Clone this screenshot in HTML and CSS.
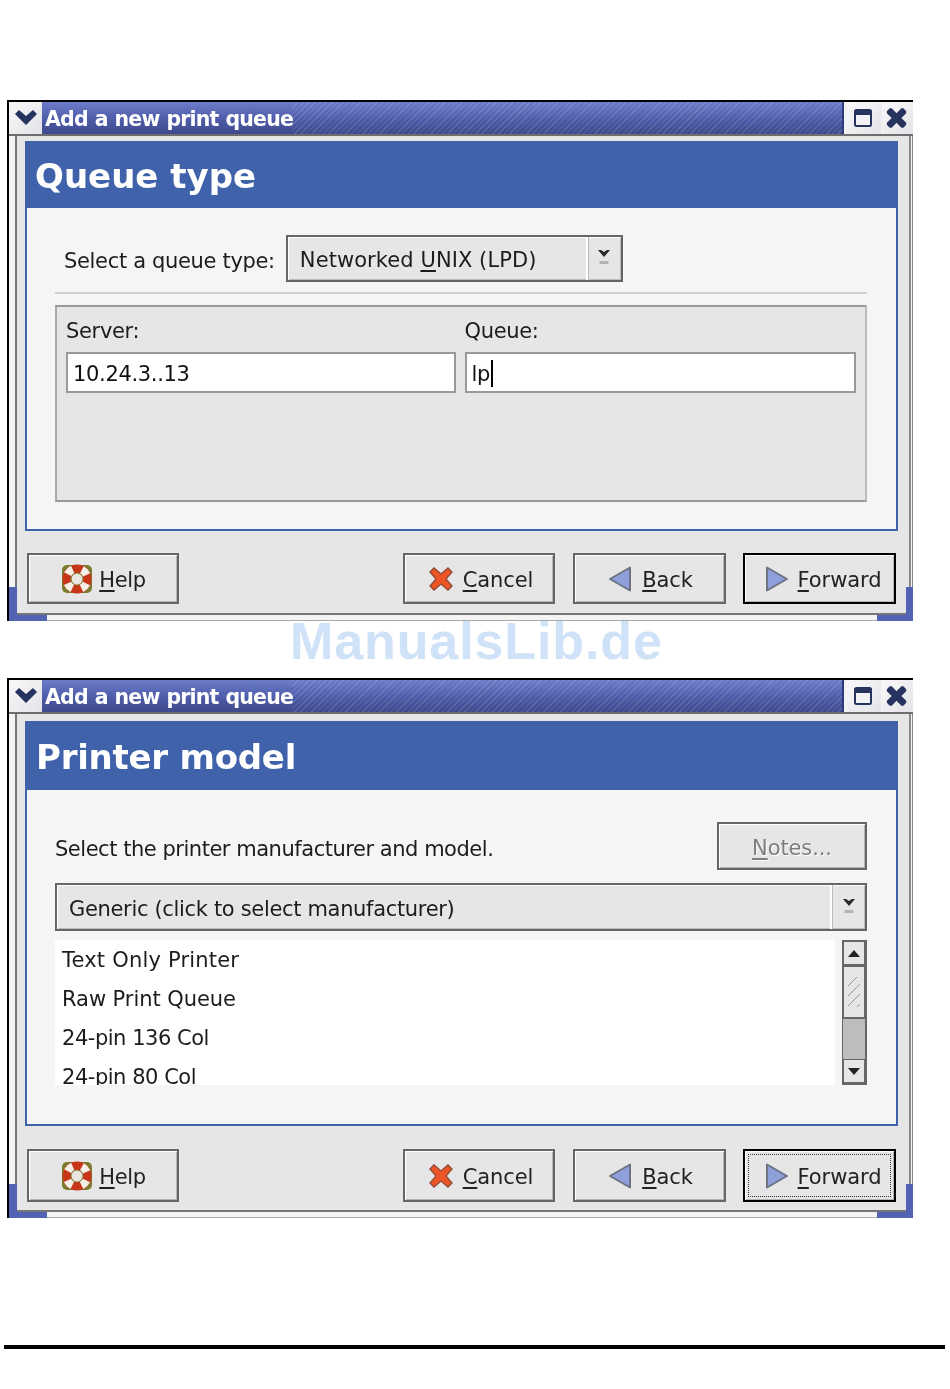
FILE: index.html
```html
<!DOCTYPE html>
<html lang="en">
<head>
<meta charset="utf-8">
<title>Add a new print queue</title>
<link rel="stylesheet" href="styles.css">
</head>
<body>
<svg class="defs" width="0" height="0" aria-hidden="true">
  <symbol id="i-menu" viewBox="0 0 33 32"><path d="M6 12 l4 -4 l7 6 l7 -6 l4 4 l-11 11z" fill="#26335f"/></symbol>
  <symbol id="i-max" viewBox="0 0 34 32"><rect x="8" y="8" width="16" height="16" rx="1.500" fill="#f2f2f6" stroke="#26335f" stroke-width="2"/><rect x="7.500" y="8" width="17" height="5" fill="#26335f"/></symbol>
  <symbol id="i-close" viewBox="0 0 32 32"><path d="M5 9 l3 -3 h2 l5 5 l5 -5 h2 l3 3 v2 l-5 5 l5 5 v2 l-3 3 h-2 l-5 -5 l-5 5 h-2 l-3 -3 v-2 l5 -5 l-5 -5z" fill="#26335f"/></symbol>
  <symbol id="i-help" viewBox="0 0 32 30"><rect x="1" y="1" width="30" height="28" rx="5" fill="#7c7a2c"/><circle cx="16" cy="15" r="10.500" fill="none" stroke="#c8361a" stroke-width="8"/><circle cx="16" cy="15" r="10.500" fill="none" stroke="#f6efe8" stroke-width="8" stroke-dasharray="7 9.500" stroke-dashoffset="-4.750"/><circle cx="16" cy="15" r="5.500" fill="#e9e6e2"/></symbol>
  <symbol id="i-cancel" viewBox="0 0 24 24"><path d="M1 5 l4 -4 l7 6 l7 -6 l4 4 l-6 7 l6 7 l-4 4 l-7 -6 l-7 6 l-4 -4 l6 -7z" fill="#ec5526" stroke="#8f4a38" stroke-width="1.300"/></symbol>
  <symbol id="i-back" viewBox="0 0 24 26"><path d="M22 1.500 V24.500 L2 13z" fill="#8f9fdc" stroke="#6d7383" stroke-width="2" stroke-linejoin="round"/></symbol>
  <symbol id="i-forward" viewBox="0 0 24 26"><path d="M2 1.500 V24.500 L22 13z" fill="#8f9fdc" stroke="#6d7383" stroke-width="2" stroke-linejoin="round"/></symbol>
  <symbol id="i-drop" viewBox="0 0 14 18"><path d="M1 2 h3 l3 2 l3 -2 h3 l-6 7z" fill="#2a2a2a"/><rect x="2.500" y="13" width="9" height="3" fill="#b4b4b4"/></symbol>
</svg>

<div class="page">
  <section class="window window-one">
    <header class="titlebar">
      <span class="wm-btn wm-menu"><svg class="wm-icon"><use href="#i-menu"/></svg></span>
      <span class="title-strip">Add a new print queue</span>
      <span class="wm-btn wm-max"><svg class="wm-icon"><use href="#i-max"/></svg></span>
      <span class="wm-btn wm-close"><svg class="wm-icon"><use href="#i-close"/></svg></span>
    </header>
    <div class="frame">
      <div class="dialog">
        <div class="content">
          <h1 class="banner">Queue type</h1>
          <div class="body body-one">
            <div class="type-row">
              <span class="label">Select a queue type:</span>
              <div class="combo combo-type"><span class="combo-text">Networked <u>U</u>NIX (LPD)</span><span class="combo-arrow"><svg class="drop"><use href="#i-drop"/></svg></span></div>
            </div>
            <div class="separator"></div>
            <div class="panel">
              <div class="field field-server">
                <span class="label">Server:</span>
                <div class="entry">10.24.3..13</div>
              </div>
              <div class="field field-queue">
                <span class="label">Queue:</span>
                <div class="entry">lp<span class="caret"></span></div>
              </div>
            </div>
          </div>
        </div>
        <div class="actions">
          <div class="btn btn-help"><svg class="ico-help"><use href="#i-help"/></svg><span><u>H</u>elp</span></div>
          <div class="spacer"></div>
          <div class="btn btn-cancel"><svg class="ico-cancel"><use href="#i-cancel"/></svg><span><u>C</u>ancel</span></div>
          <div class="btn btn-wide btn-back"><svg class="ico-arrow"><use href="#i-back"/></svg><span><u>B</u>ack</span></div>
          <div class="btn btn-wide btn-default"><svg class="ico-arrow"><use href="#i-forward"/></svg><span><u>F</u>orward</span></div>
        </div>
      </div>
    </div>
    <span class="corner corner-l"></span><span class="corner corner-r"></span>
  </section>

  <section class="window window-two">
    <header class="titlebar">
      <span class="wm-btn wm-menu"><svg class="wm-icon"><use href="#i-menu"/></svg></span>
      <span class="title-strip">Add a new print queue</span>
      <span class="wm-btn wm-max"><svg class="wm-icon"><use href="#i-max"/></svg></span>
      <span class="wm-btn wm-close"><svg class="wm-icon"><use href="#i-close"/></svg></span>
    </header>
    <div class="frame">
      <div class="dialog">
        <div class="content">
          <h1 class="banner banner-two">Printer model</h1>
          <div class="body body-two">
            <div class="model-row">
              <span class="label label-model">Select the printer manufacturer and model.</span>
              <div class="btn btn-notes"><span><u>N</u>otes...</span></div>
            </div>
            <div class="combo combo-maker"><span class="combo-text">Generic (click to select manufacturer)</span><span class="combo-arrow"><svg class="drop"><use href="#i-drop"/></svg></span></div>
            <div class="list-wrap">
              <ul class="list">
                <li class="item-text">Text Only Printer</li>
                <li class="item-raw">Raw Print Queue</li>
                <li>24-pin 136 Col</li>
                <li>24-pin 80 Col</li>
              </ul>
              <div class="scrollbar">
                <span class="sb-btn"><span class="tri-up"></span></span>
                <span class="sb-thumb"></span>
                <span class="sb-trough"></span>
                <span class="sb-btn"><span class="tri-down"></span></span>
              </div>
            </div>
          </div>
        </div>
        <div class="actions actions-two">
          <div class="btn btn-help"><svg class="ico-help"><use href="#i-help"/></svg><span><u>H</u>elp</span></div>
          <div class="spacer"></div>
          <div class="btn btn-cancel"><svg class="ico-cancel"><use href="#i-cancel"/></svg><span><u>C</u>ancel</span></div>
          <div class="btn btn-wide btn-back"><svg class="ico-arrow"><use href="#i-back"/></svg><span><u>B</u>ack</span></div>
          <div class="btn btn-wide btn-default btn-focus"><svg class="ico-arrow"><use href="#i-forward"/></svg><span><u>F</u>orward</span></div>
        </div>
      </div>
    </div>
    <span class="corner corner-l"></span><span class="corner corner-r"></span>
  </section>

  <hr class="rule">
  <div class="watermark">ManualsLib.de</div>
</div>
</body>
</html>
```
FILE: styles.css
```css
* { box-sizing: border-box; }
html, body { margin: 0; padding: 0; background: #fff; }
body { width: 950px; height: 1389px; overflow: hidden; font-family: "DejaVu Sans", sans-serif; color: #1c1c1c; }
.defs { position: absolute; }
.page { position: relative; height: 1389px; padding: 100px 0 0 7px; }
u { text-decoration-thickness: 2px; text-underline-offset: 3px; }

.window { position: relative; width: 906px; display: flex; flex-direction: column; border-top: 2px solid #000; border-left: 2px solid #000; filter: blur(0.4px); }
.window-one { height: 521px; }
.window-two { height: 540px; margin-top: 57px; }

.titlebar { display: flex; height: 34px; flex: none; border-bottom: 2px solid #6e6e6e; background: #f2f2f4; }
.wm-btn { display: block; flex: none; background: linear-gradient(135deg, #f8f8fa, #e4e4e8); }
.wm-menu { width: 33px; }
.wm-max { width: 34px; margin-left: 3px; }
.wm-close { width: 31px; margin-left: 1px; }
.wm-icon { display: block; width: 100%; height: 32px; }
.title-strip {
  flex: 1; height: 32px; padding-left: 3px; color: #fff; font-size: 20.5px; font-weight: 700; line-height: 34px; letter-spacing: -0.8px; word-spacing: 0.5px; white-space: nowrap;
  background:
    repeating-linear-gradient(135deg, rgba(255,255,255,.13) 0 1px, transparent 1px 4px) 250px 0 no-repeat,
    linear-gradient(#6d7cc9, #4d5ba8 55%, #3f4a8c);
  border-right: 2px solid #2f3a78;
}

.frame { flex: 1; padding: 0 1px 1px 6px; background: #f4f4f4; border-right: 1px solid #888; border-bottom: 1px solid #aaa; }
.dialog { height: 100%; display: flex; flex-direction: column; padding: 5px 6px 0 8px; background: #e6e6e6; border-left: 2px solid #777; border-right: 2px solid #888; border-bottom: 2px solid #777; }
.window-one .dialog { height: 479px; }
.window-two .dialog { height: 498px; padding-top: 7px; }

.content { display: flex; flex-direction: column; flex: none; border: 2px solid #3f62ab; border-top: 0; background: #f5f5f5; width: 873px; }
.window-one .content { height: 390px; }
.window-two .content { height: 405px; }
.banner { margin: 0; height: 67px; flex: none; padding-left: 8px; background: #3f62ab; color: #fff; font-size: 34px; font-weight: 700; line-height: 70px; white-space: nowrap; }
.banner-two { height: 69px; padding-left: 9px; line-height: 72px; letter-spacing: -0.25px; }
.body { flex: 1; background: #f5f5f5; }
.body-one { padding: 27px 29px 0 28px; }
.body-two { padding: 32px 29px 0 28px; }
.label, .combo, .entry, .list { font-size: 21px; letter-spacing: -0.33px; }
.label { line-height: 26px; white-space: nowrap; }
.label-model { letter-spacing: -0.47px; }

.type-row { display: flex; align-items: center; gap: 11px; padding-left: 9px; }
.type-row .label { padding-top: 4px; }
.combo { display: flex; align-items: stretch; border: 2px solid #666; background: #e6e6e6; box-shadow: inset 1px 1px 0 #fff, inset -1px -1px 0 #bbb; white-space: nowrap; }
.combo-type { width: 337px; height: 47px; letter-spacing: 0.07px; }
.combo-text { flex: 1; padding-left: 12px; line-height: 47px; border-right: 2px solid #fff; box-shadow: 1px 0 0 #bbb; }
.combo-arrow { flex: none; width: 33px; display: flex; justify-content: center; align-items: center; }
.drop { width: 14px; height: 18px; display: block; margin-top: -3px; }
.separator { height: 2px; margin-top: 10px; background: #d0d0d0; }
.panel { height: 197px; margin-top: 11px; display: flex; gap: 9px; padding: 11px 9px 0 9px; background: #e6e6e6; border: 2px solid; border-color: #999 #bbb #999 #aaa; }
.field { display: flex; flex-direction: column; gap: 8px; }
.field-server { width: 390px; }
.field-queue { width: 392px; }
.entry { height: 41px; padding-left: 5px; line-height: 41px; background: #fff; border: 2px solid #999; color: #111; }
.caret { display: inline-block; width: 2px; height: 27px; margin-left: 1px; vertical-align: -6px; background: #000; }

.actions { display: flex; gap: 17px; width: 869px; margin-left: 2px; padding-top: 22px; }
.actions-two { padding-top: 23px; }
.spacer { flex: 1; }
.actions .btn { width: 152px; height: 51px; padding-top: 2px; }
.actions .btn-wide { width: 153px; }
.actions .btn-cancel { margin-right: 1px; padding-left: 4px; }
.actions .btn-back { padding-left: 2px; }
.actions .btn-default { padding-left: 7px; gap: 9px; }
.actions-two .btn { height: 53px; }
.btn { display: flex; align-items: center; justify-content: center; gap: 10px; font-size: 21px; letter-spacing: -0.1px; background: #e6e6e6; border: 2px solid #666; box-shadow: inset 1px 1px 0 #fff, inset -1px -1px 0 #b4b4b4; color: #222; white-space: nowrap; }
.actions .btn-help { gap: 6px; letter-spacing: -0.33px; padding-left: 1px; }
.actions .btn-default { border-color: #000; position: relative; }
.btn-focus::after { content: ""; position: absolute; inset: 3px; border: 1px dotted #333; }
.ico-help { width: 32px; height: 30px; margin-top: -2px; }
.ico-cancel { width: 24px; height: 24px; margin-top: -2px; }
.ico-arrow { width: 24px; height: 26px; margin-top: -2px; }

.model-row { display: flex; align-items: center; justify-content: space-between; height: 48px; }
.model-row .label { padding-top: 5px; }
.btn-notes { width: 150px; height: 48px; padding-top: 4px; color: #7d7d7d; text-shadow: 1px 1px 0 #fff; }
.combo-maker { height: 48px; margin-top: 13px; }
.combo-maker .combo-text { padding-left: 12px; line-height: 48px; }
.list-wrap { display: flex; justify-content: space-between; margin-top: 9px; height: 145px; }
.list { width: 780px; margin: 0; padding: 0 0 0 7px; overflow: hidden; list-style: none; background: #fff; letter-spacing: -0.47px; }
.list li { height: 39px; line-height: 41px; white-space: nowrap; }
.list .item-text { letter-spacing: 0.2px; }
.list .item-raw { letter-spacing: -0.06px; }
.scrollbar { width: 25px; display: flex; flex-direction: column; background: #bdbdbd; border: 2px solid #666; border-width: 1px 2px 2px 1px; }
.sb-btn { flex: none; height: 24px; display: flex; align-items: center; justify-content: center; background: #e6e6e6; border: 1px solid #666; }
.sb-thumb { flex: none; height: 54px; border: 2px solid #666; border-left-width: 1px; border-right-width: 1px;
  background: repeating-linear-gradient(135deg, transparent 0 6px, #999 6px 7px) center / 12px 30px no-repeat, #e6e6e6; }
.sb-trough { flex: 1; }
.tri-up { width: 0; height: 0; border: 6px solid transparent; border-top: 0; border-bottom: 7px solid #222; }
.tri-down { width: 0; height: 0; border: 6px solid transparent; border-bottom: 0; border-top: 7px solid #222; }

.corner { position: absolute; background: #5263b5; }
.corner-l { left: 0; bottom: 0; width: 8px; height: 34px; }
.corner-l::after { content: ""; position: absolute; left: 0; bottom: 0; width: 38px; height: 6px; background: #5263b5; }
.corner-r { right: 0; bottom: 0; width: 7px; height: 34px; }
.corner-r::after { content: ""; position: absolute; right: 0; bottom: 0; width: 36px; height: 6px; background: #5263b5; }

.rule { position: absolute; left: 4px; top: 1345px; width: 941px; height: 4px; margin: 0; border: 0; background: #000; }
.watermark { position: absolute; left: 290px; top: 609px; font-family: "Liberation Sans", sans-serif; font-size: 52px; font-weight: 700; line-height: 64px; letter-spacing: 0.9px; color: #cfe2f8; white-space: nowrap; }
```
